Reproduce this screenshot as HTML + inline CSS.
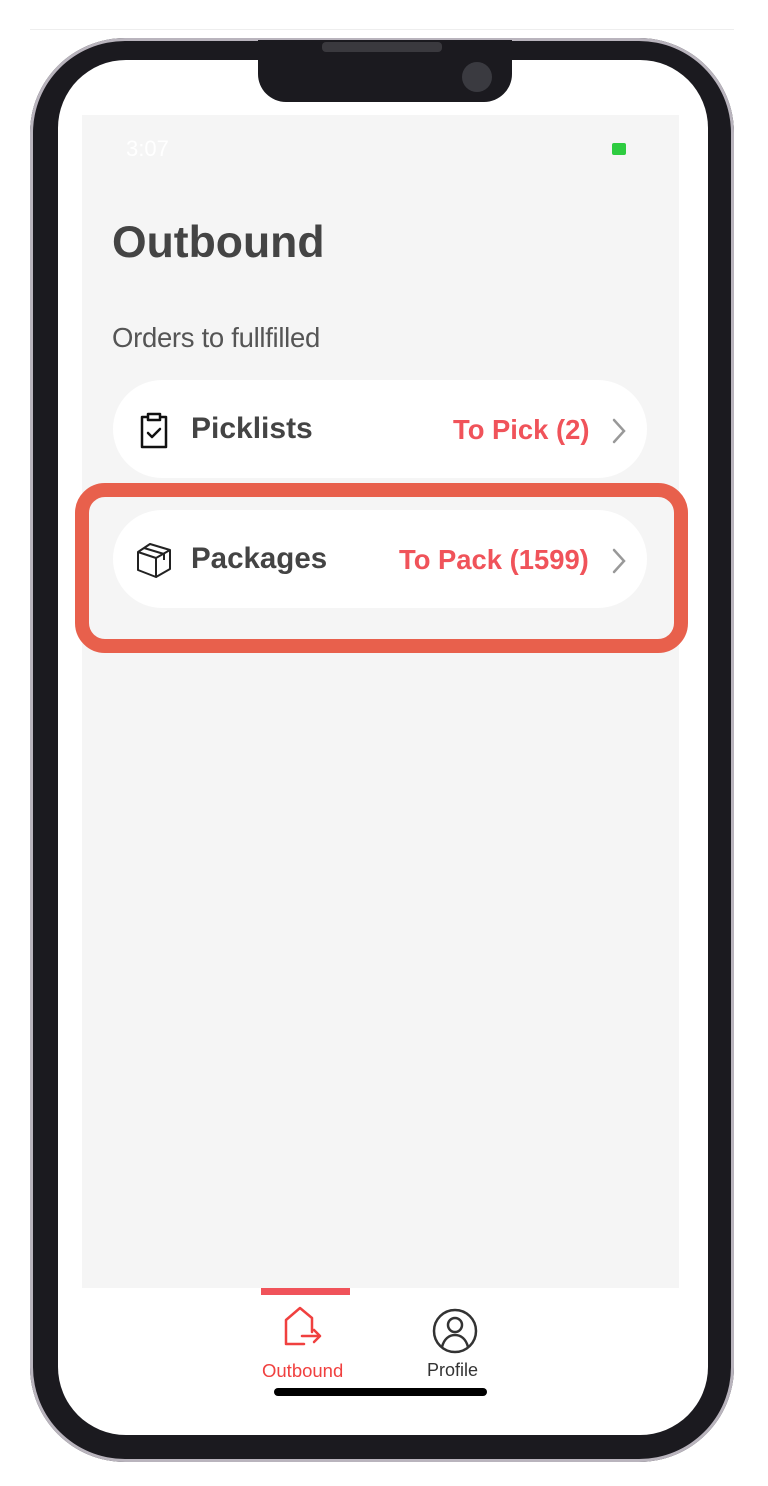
<!DOCTYPE html>
<html><head><meta charset="utf-8"><style>
*{margin:0;padding:0;box-sizing:border-box}
body{width:768px;height:1486px;background:#fff;position:relative;overflow:hidden;font-family:"Liberation Sans",sans-serif}
.abs{position:absolute}
.phone{left:30px;top:38px;width:704px;height:1424px;border-radius:95px;background:#1b1a1f;box-shadow:0 0 0 3px #b9b4bd inset}
.screen{left:58px;top:60px;width:650px;height:1375px;border-radius:68px;background:#fff}
.content{left:82px;top:115px;width:597px;height:1173px;background:#f5f5f5}
.notch{left:258px;top:40px;width:254px;height:62px;background:#1b1a1f;border-radius:0 0 28px 28px}
.card{left:113px;width:534px;height:98px;background:#fff;border-radius:49px}
.lbl{font-weight:bold;color:#444}
.red{color:#f0535a;font-weight:bold;font-size:27.4px}
</style></head><body>
<div class="abs" style="left:30px;top:29px;width:704px;height:1px;background:#eee"></div>
<div class="abs phone"></div>
<div class="abs screen"></div>
<div class="abs notch"></div>
<div class="abs" style="left:322px;top:42px;width:120px;height:10px;background:#3a393e;border-radius:4px"></div>
<div class="abs" style="left:462px;top:62px;width:30px;height:30px;border-radius:50%;background:#3a3a40"></div>
<div class="abs content"></div>
<div class="abs" style="left:126px;top:136px;color:#fff;font-size:22px">3:07</div>
<div class="abs" style="left:612px;top:143px;width:14px;height:12px;background:#2ecc40;border-radius:2px"></div>
<div class="abs" style="left:112px;top:218px;font-size:44.5px;font-weight:bold;color:#444">Outbound</div>
<div class="abs" style="left:112px;top:322px;font-size:27.5px;color:#555;letter-spacing:-0.3px">Orders to fullfilled</div>

<div class="abs card" style="top:380px"></div>
<svg class="abs" style="left:138px;top:411px" width="32" height="40" viewBox="0 0 32 40" fill="none" stroke="#111" stroke-width="2.5" stroke-linejoin="round" stroke-linecap="round"><path d="M9 6H4v30h24V6h-5"/><path d="M10 3h12v6H10z"/><path d="M10 22l4 4 8-8"/></svg>
<div class="abs lbl" style="left:191px;top:412px;font-size:30px">Picklists</div>
<div class="abs red" style="left:453px;top:414px">To Pick (2)</div>
<svg class="abs" style="left:610px;top:417px" width="18" height="28" viewBox="0 0 18 28" fill="none" stroke="#999" stroke-width="2.5" stroke-linecap="round"><path d="M4 3l10 11-10 11"/></svg>

<div class="abs" style="left:75px;top:483px;width:613px;height:170px;border:14px solid #e8604c;border-radius:30px"></div>
<div class="abs card" style="top:510px"></div>
<svg class="abs" style="left:134px;top:540px" width="40" height="40" viewBox="0 0 40 40" fill="none" stroke="#222" stroke-width="2" stroke-linejoin="round"><path d="M4 12l12-8 20 6-14 8z"/><path d="M4 12v18l18 7V18"/><path d="M36 10v19l-14 8"/><path d="M10 8l20 6v6"/></svg>
<div class="abs lbl" style="left:191px;top:542px;font-size:29.5px">Packages</div>
<div class="abs red" style="left:399px;top:544px">To Pack (1599)</div>
<svg class="abs" style="left:610px;top:547px" width="18" height="28" viewBox="0 0 18 28" fill="none" stroke="#999" stroke-width="2.5" stroke-linecap="round"><path d="M4 3l10 11-10 11"/></svg>

<div class="abs" style="left:261px;top:1288px;width:89px;height:7px;background:#f0535a"></div>
<svg class="abs" style="left:280px;top:1306px" width="50" height="50" viewBox="0 0 50 50" fill="none" stroke="#f0403f" stroke-width="2.5" stroke-linecap="round" stroke-linejoin="round"><path d="M24 38H6V14L20 2l12 10v14"/><path d="M22 30h18M34 24l6 6-6 6"/></svg>
<svg class="abs" style="left:431px;top:1307px" width="48" height="48" viewBox="0 0 48 48" fill="none" stroke="#333" stroke-width="2.5"><circle cx="24" cy="24" r="21"/><circle cx="24" cy="18" r="7"/><path d="M11 40c2-8 7-12 13-12s11 4 13 12"/></svg>
<div class="abs" style="left:262px;top:1360px;font-size:18.5px;color:#f0403f">Outbound</div>
<div class="abs" style="left:427px;top:1360px;font-size:18px;color:#333">Profile</div>
<div class="abs" style="left:274px;top:1388px;width:213px;height:8px;background:#000;border-radius:4px"></div>
</body></html>
